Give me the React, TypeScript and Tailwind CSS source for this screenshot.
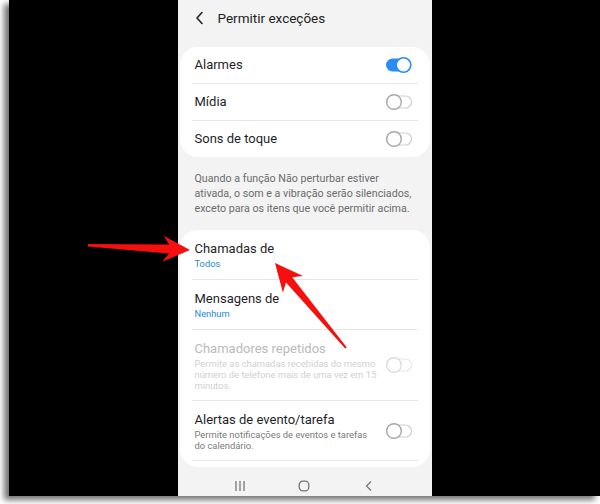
import React from "react";

const font = { fontFamily: "Roboto, 'Noto Sans', sans-serif" };

function Toggle({ on = false, disabled = false }: { on?: boolean; disabled?: boolean }) {
  if (on) {
    return (
      <svg width="28" height="18" viewBox="0 0 28 18">
        <rect x="1" y="2.5" width="25" height="13" rx="6.5" fill="#2a8cf2" />
        <circle cx="18.5" cy="9" r="7.3" fill="#fff" stroke="#2a8cf2" strokeWidth="1.6" />
      </svg>
    );
  }
  const c = disabled ? "#dcdcdc" : "#a8a8a8";
  const t = disabled ? "#e8e8e8" : "#cfcfcf";
  return (
    <svg width="28" height="18" viewBox="0 0 28 18">
      <rect x="1.5" y="3" width="25" height="12" rx="6" fill="#fff" stroke={t} strokeWidth="1.2" />
      <circle cx="9" cy="9" r="7.3" fill="#fff" stroke={c} strokeWidth="1.4" />
    </svg>
  );
}

function Divider() {
  return <div className="mx-[12px] h-px bg-[#e6e6e6]" />;
}

function SwitchRow({ label, on }: { label: string; on?: boolean }) {
  return (
    <div className="flex h-[36px] items-center justify-between pl-[15px] pr-[17px]">
      <span className="text-[13px] text-[#1f1f1f]">{label}</span>
      <Toggle on={on} />
    </div>
  );
}

function PickRow({ label, value }: { label: string; value: string }) {
  return (
    <div className="flex h-[49px] flex-col justify-center pl-[15px]">
      <span className="text-[13px] leading-[17px] text-[#1f1f1f]">{label}</span>
      <span className="text-[9.3px] leading-[13px] text-[#1b8bd6]">{value}</span>
    </div>
  );
}

function DescRow({
  label,
  lines,
  disabled,
  h,
}: {
  label: string;
  lines: string[];
  disabled?: boolean;
  h: string;
}) {
  return (
    <div className={`flex items-center justify-between pl-[15px] pr-[17px] ${h}`}>
      <div>
        <p
          className={`text-[13px] leading-[17px] ${disabled ? "text-[#bababa]" : "text-[#1f1f1f]"}`}
        >
          {label}
        </p>
        <p
          className={`mt-[1px] whitespace-nowrap text-[9.4px] leading-[11px] ${disabled ? "text-[#cfcfcf]" : "text-[#7a7a7a]"}`}
        >
          {lines.map((l, i) => (
            <React.Fragment key={i}>
              {i > 0 && <br />}
              {l}
            </React.Fragment>
          ))}
        </p>
      </div>
      <Toggle disabled={disabled} />
    </div>
  );
}

function Arrows() {
  return (
    <svg className="pointer-events-none absolute left-0 top-0" width="600" height="504" viewBox="0 0 600 504">
      <polygon
        points="190,250 163.6,235.7 169.2,244.5 88,244 88,246.5 168.8,253.5 162.4,261.7"
        fill="#f50f0f"
      />
      <polygon
        points="275,263 302.9,276.1 292.2,277.3 346.8,347.4 345.2,348.6 286,282.5 282.9,292.7"
        fill="#f50f0f"
      />
    </svg>
  );
}

export default function App() {
  return (
    <div className="relative h-[504px] w-[600px] overflow-hidden bg-white" style={font}>
      <div className="ml-[9px] flex h-[496px] w-[591px] justify-center bg-black shadow-[-5px_4px_6px_rgba(0,0,0,0.55)]">
        <div className="flex h-[496px] w-[254px] flex-col bg-[#f3f3f3]">
          {/* Header */}
          <div className="flex h-[36px] items-center pl-[17px]">
            <svg width="10" height="14" viewBox="0 0 10 14">
              <path d="M7 1.5L2 7l5 5.5" fill="none" stroke="#222" strokeWidth="1.6" strokeLinecap="round" strokeLinejoin="round" />
            </svg>
            <span className="ml-[13px] text-[13.5px] text-[#222]">Permitir exceções</span>
          </div>

          {/* Toggles card */}
          <div className="mx-[2px] mt-[11px] rounded-[18px] bg-white">
            <SwitchRow label="Alarmes" on />
            <Divider />
            <SwitchRow label="Mídia" />
            <Divider />
            <SwitchRow label="Sons de toque" />
          </div>

          <p className="whitespace-nowrap pb-[14px] pl-[17px] pt-[14px] text-[10.7px] leading-[15px] text-[#6b6b6b]">
            Quando a função Não perturbar estiver
            <br />
            ativada, o som e a vibração serão silenciados,
            <br />
            exceto para os itens que você permitir acima.
          </p>

          {/* Calls card */}
          <div className="mx-[2px] flex-1 rounded-[18px] bg-white">
            <PickRow label="Chamadas de" value="Todos" />
            <Divider />
            <PickRow label="Mensagens de" value="Nenhum" />
            <Divider />
            <DescRow
              h="h-[70px]"
              disabled
              label="Chamadores repetidos"
              lines={[
                "Permite as chamadas recebidas do mesmo",
                "número de telefone mais de uma vez em 15",
                "minutos.",
              ]}
            />
            <Divider />
            <DescRow
              h="h-[59px]"
              label="Alertas de evento/tarefa"
              lines={["Permite notificações de eventos e tarefas", "do calendário."]}
            />
            <Divider />
          </div>

          {/* Nav bar */}
          <div className="flex h-[29px] items-end justify-around px-[30px] pb-[4px]">
            <svg width="12" height="12" viewBox="0 0 12 12">
              <path d="M2 1v10M6 1v10M10 1v10" stroke="#777" strokeWidth="1.3" />
            </svg>
            <svg width="12" height="12" viewBox="0 0 12 12">
              <rect x="1.2" y="1.2" width="9.6" height="9.6" rx="3.5" fill="none" stroke="#777" strokeWidth="1.3" />
            </svg>
            <svg width="12" height="12" viewBox="0 0 12 12">
              <path d="M8 1.5L3.5 6 8 10.5" fill="none" stroke="#777" strokeWidth="1.3" />
            </svg>
          </div>
        </div>
      </div>
      <Arrows />
    </div>
  );
}
